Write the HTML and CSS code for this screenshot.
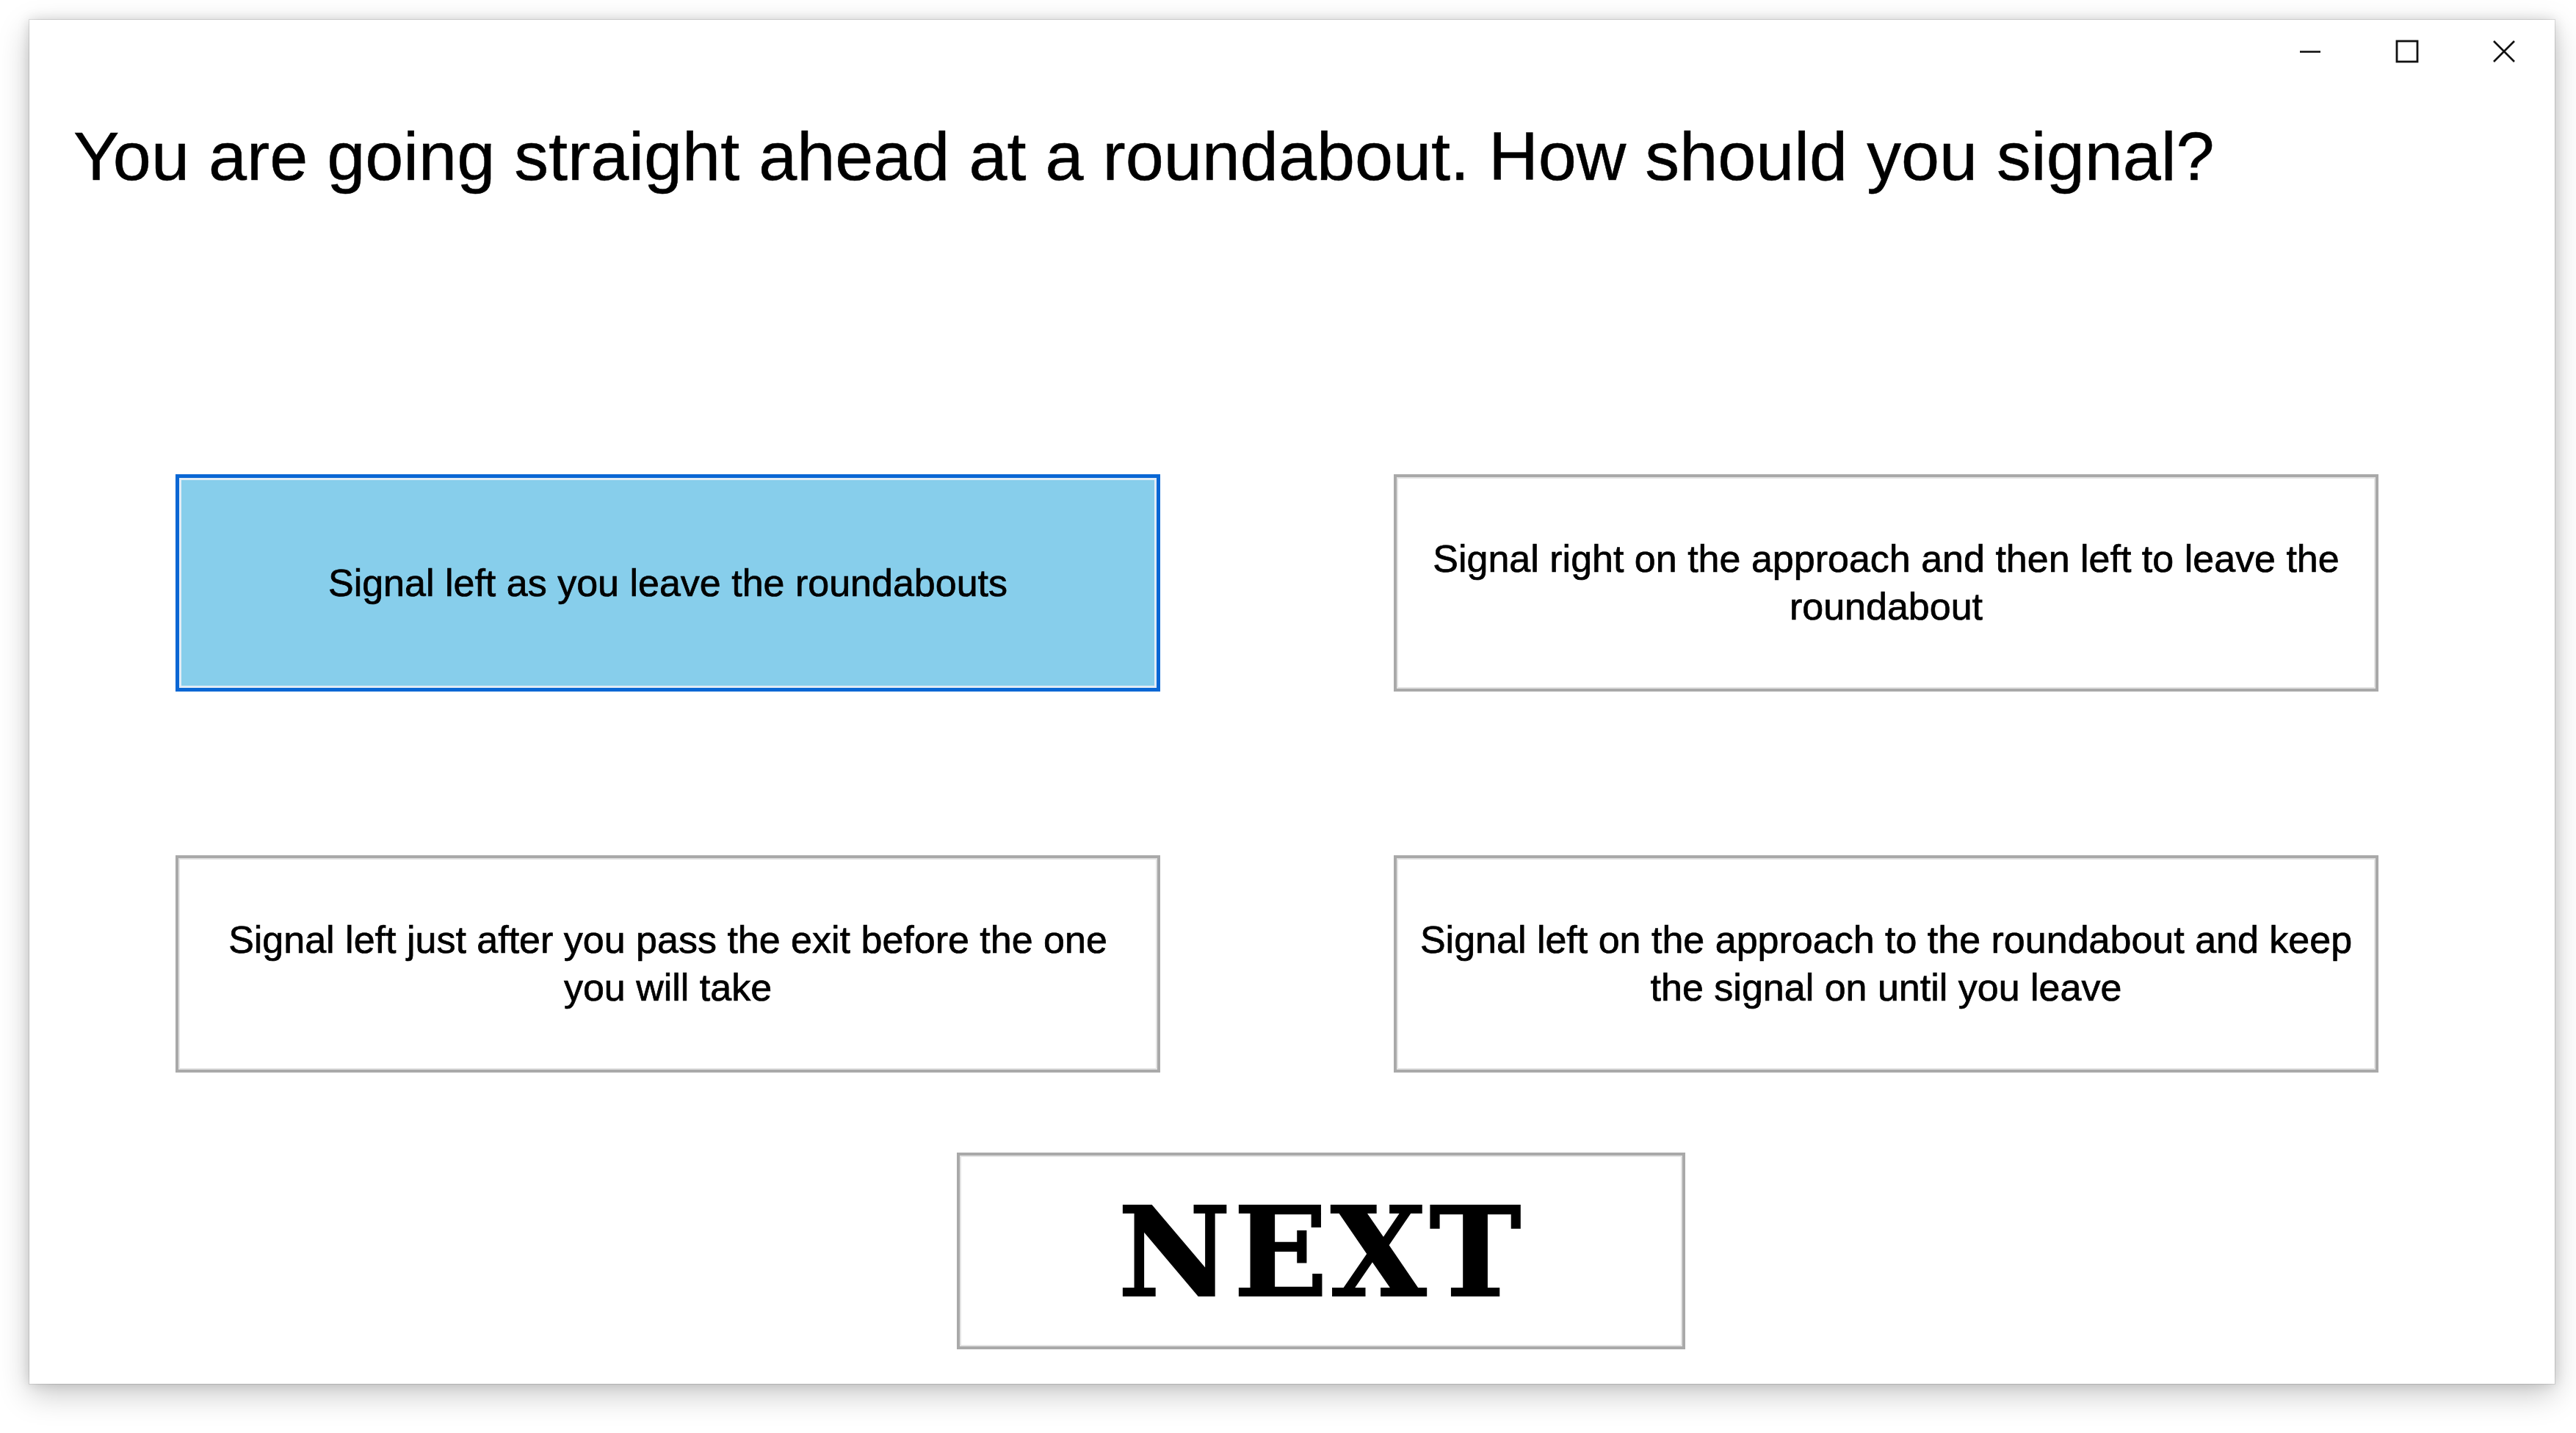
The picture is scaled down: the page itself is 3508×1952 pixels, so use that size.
FILE: index.html
```html
<!DOCTYPE html>
<html lang="en">
<head>
<meta charset="utf-8">
<title>Quiz</title>
<link rel="stylesheet" href="styles.css">
</head>
<body>
<div class="window">
  <div class="titlebar">
    <div class="caption-btn">
      <svg width="30" height="30" viewBox="0 0 30 30"><path d="M1 15.5 H29" stroke="#111" stroke-width="2.6" fill="none"/></svg>
    </div>
    <div class="caption-btn">
      <svg width="32" height="32" viewBox="0 0 32 32"><rect x="2" y="2" width="28" height="28" stroke="#111" stroke-width="2.8" fill="none"/></svg>
    </div>
    <div class="caption-btn">
      <svg width="32" height="32" viewBox="0 0 32 32"><path d="M2 2 L30 30 M30 2 L2 30" stroke="#111" stroke-width="2.6" fill="none"/></svg>
    </div>
  </div>
  <h1 class="question">You are going straight ahead at a roundabout. How should you signal?</h1>
  <div class="answers">
    <div class="answer selected">Signal left as you leave the roundabouts</div>
    <div class="answer">Signal right on the approach and then left to leave the roundabout</div>
    <div class="answer">Signal left just after you pass the exit before the one you will take</div>
    <div class="answer">Signal left on the approach to the roundabout and keep the signal on until you leave</div>
  </div>
  <div class="next">NEXT</div>
</div>
</body>
</html>
```

FILE: styles.css
```css
html, body {
  margin: 0;
  padding: 0;
}
body {
  width: 3508px;
  height: 1952px;
  box-sizing: border-box;
  padding: 27px 0 0 40px;
  background: #ffffff;
  overflow: hidden;
  font-family: "Liberation Sans", Arial, sans-serif;
  color: #000;
}
.window {
  width: 3439px;
  height: 1858px;
  box-sizing: border-box;
  background: #ffffff;
  display: flex;
  flex-direction: column;
  box-shadow: 0 0 0 1px rgba(0,0,0,0.10), 0 14px 40px rgba(0,0,0,0.22), 0 0 16px rgba(0,0,0,0.14);
}
.titlebar {
  height: 86px;
  display: flex;
  justify-content: flex-end;
  padding-right: 3px;
  flex: none;
}
.caption-btn {
  width: 132px;
  height: 86px;
  display: flex;
  align-items: center;
  justify-content: center;
}
.caption-btn svg {
  display: block;
}
.question {
  margin: 46px 0 0 60px;
  font-size: 93.6px;
  font-weight: normal;
  line-height: 107px;
  white-space: nowrap;
  -webkit-text-stroke: 0.5px #000;
  flex: none;
}
.answers {
  margin: 380px 0 0 199px;
  display: grid;
  grid-template-columns: 1341px 1341px;
  grid-template-rows: 296px 296px;
  column-gap: 318px;
  row-gap: 223px;
  flex: none;
}
.answer {
  box-sizing: border-box;
  display: flex;
  align-items: center;
  justify-content: center;
  text-align: center;
  padding: 0 22px;
  font-size: 52px;
  line-height: 65px;
  background: #ffffff;
  border: 4px solid #a9a9a9;
  box-shadow: inset 0 0 0 2px #e4e4e4;
  -webkit-text-stroke: 0.7px #000;
}
.answer.selected {
  background: #87ceeb;
  border: 5px solid #0a67d4;
  box-shadow: inset 0 0 0 3px #e2ecf5;
}
.next {
  margin: 109px 0 0 1263px;
  width: 992px;
  height: 268px;
  box-sizing: border-box;
  padding-top: 4px;
  border: 4px solid #a9a9a9;
  box-shadow: inset 0 0 0 2px #e4e4e4;
  display: flex;
  align-items: center;
  justify-content: center;
  font-family: "DejaVu Serif", serif;
  font-weight: bold;
  font-size: 168px;
  letter-spacing: 4px;
  -webkit-text-stroke: 2px #000;
  flex: none;
}
```
